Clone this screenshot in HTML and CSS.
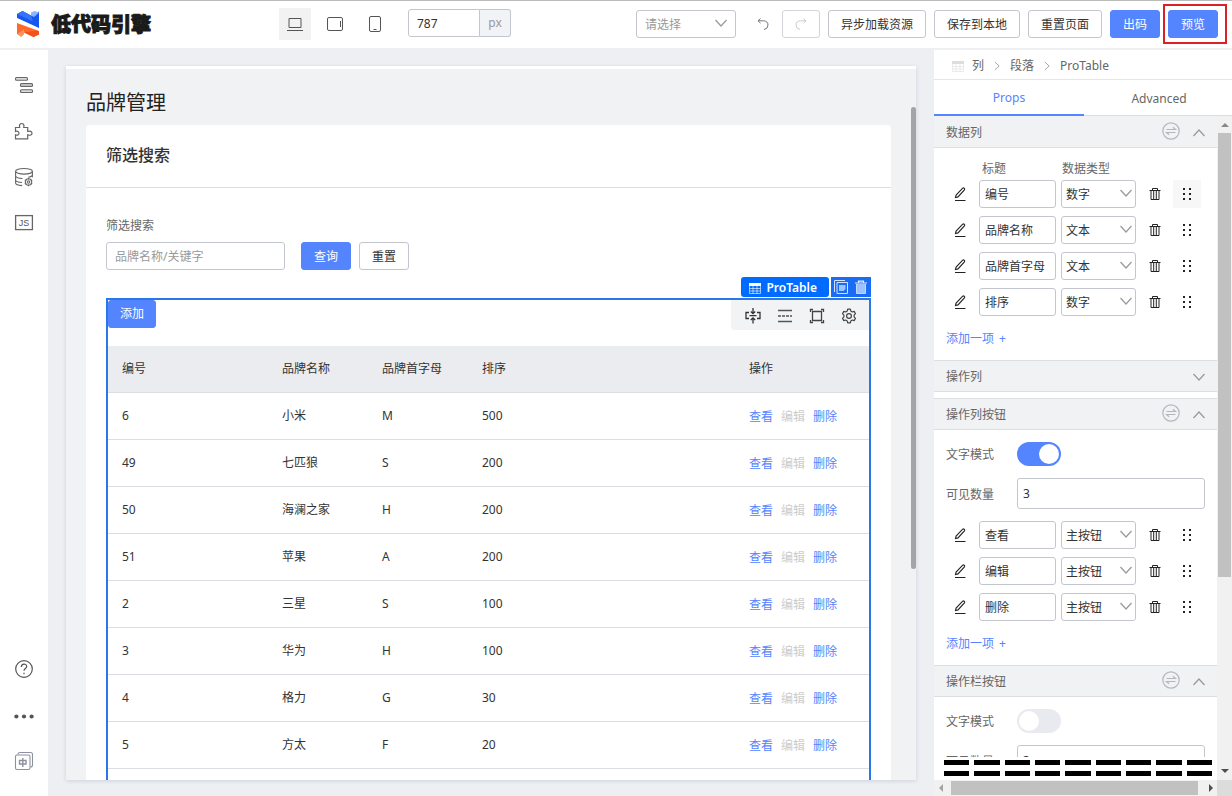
FILE: index.html
```html
<!DOCTYPE html>
<html lang="zh-CN">
<head>
<meta charset="utf-8">
<title>低代码引擎</title>
<link rel="stylesheet" href="styles.css">
</head>
<body>
<svg class="sprite" aria-hidden="true">
  <symbol id="chev" viewBox="0 0 14 14"><path d="M1.500 4 7 10l5.500-6" fill="none" stroke="currentColor" stroke-width="1.200"/></symbol>
  <symbol id="pencil" viewBox="0 0 14 14"><path d="M2 13.500h10.500M2.500 10.500l.6-2.500L9.700 1.200q.9-.6 1.600.1t.1 1.600L5 9.900z" fill="none" stroke="currentColor" stroke-width="1.100"/></symbol>
  <symbol id="trash" viewBox="0 0 14 14"><path d="M1.500 3.500h11M4.500 3.500v-2h5v2M3 3.500v9h8v-9M5.700 4v8M8.300 4v8" fill="none" stroke="currentColor"/></symbol>
  <symbol id="dots" viewBox="0 0 14 14"><path d="M3 1h2v2H3zM9 1h2v2H9zM3 6h2v2H3zM9 6h2v2H9zM3 11h2v2H3zM9 11h2v2H9z" fill="currentColor"/></symbol>
  <symbol id="swap" viewBox="0 0 18 18"><circle cx="9" cy="9" r="8.200" fill="none" stroke="currentColor" stroke-width="1.200"/><path d="M4.500 7.500h9l-2.600-2.300M13.500 10.500h-9l2.600 2.300" fill="none" stroke="currentColor" stroke-width="1.200"/></symbol>
  <symbol id="grid" viewBox="0 0 12 12"><path d="M0 1h12v3H0z" fill="currentColor"/><path d="M.5 4v7.500h11V4M.5 6.500h11M.5 9h11M4 4v7.500M8 4v7.500" fill="none" stroke="currentColor" stroke-width=".6"/></symbol>
</svg>

<header class="topbar">
  <div class="brand">
    <svg class="brand-mark" viewBox="0 0 24 28" aria-hidden="true">
      <path d="M1 4 6.500 1 15 5.500l8-4V18L1 8z" fill="#1557f0"/>
      <path d="M6.500 1 15 5.500l2 6L1 4z" fill="#3374fa"/>
      <path d="M15 5.500V2.500L18.500 1 23 2.500 18 7z" fill="#8db4ff"/>
      <path d="M1 10.500 23 20v4.500L17.500 27 8 22.500 6 26 1 24z" fill="#ff6a2b"/>
      <path d="M8 22.500 23 20v4.500L17.500 27z" fill="#f2511b"/>
      <path d="M1 24l7-4.500v5L5 27z" fill="#ff9464"/>
      <path d="M1 8.200 23 18.500V21L1 13z" fill="#fff"/>
    </svg>
    <span class="brand-name">低代码引擎</span>
  </div>
  <div class="devices">
    <button class="device active" aria-label="桌面"><svg width="18" height="18" viewBox="0 0 18 18"><path d="M3 3.500h12v9H3zM1 15.500h16" fill="none" stroke="#555"/></svg></button>
    <button class="device" aria-label="平板"><svg width="18" height="18" viewBox="0 0 18 18"><rect x="1.500" y="2.500" width="15" height="13" rx="1.500" fill="none" stroke="#555"/><path d="M14.500 6v6" stroke="#555"/></svg></button>
    <button class="device" aria-label="手机"><svg width="18" height="18" viewBox="0 0 18 18"><rect x="3.500" y="1.500" width="11" height="15" rx="1.500" fill="none" stroke="#555"/><path d="M7.500 14.500h3" stroke="#555"/></svg></button>
    <div class="size-box"><input class="size-input" aria-label="宽度" value="787"><span class="size-unit">px</span></div>
  </div>
  <div class="actions">
    <div class="select top-select"><select aria-label="请选择"><option>请选择</option></select><svg><use href="#chev"/></svg></div>
    <div class="history">
      <button class="icon-btn" aria-label="撤销"><svg width="14" height="14" viewBox="0 0 14 14"><path d="M4.500 1.500 2 3.800l2.500 2.300M2 3.800h5.500q4.500.3 4.500 4.200T8 12.500" fill="none" stroke="#777"/></svg></button>
      <button class="icon-btn boxed" aria-label="重做"><svg width="14" height="14" viewBox="0 0 14 14"><path d="M9.500 1.500 12 3.800 9.500 6.100M12 3.800H6.500Q2 4.100 2 8t4 4.500" fill="none" stroke="#ccc"/></svg></button>
    </div>
    <button class="btn">异步加载资源</button>
    <button class="btn">保存到本地</button>
    <button class="btn">重置页面</button>
    <button class="btn primary">出码</button>
    <div class="highlight"><button class="btn primary">预览</button></div>
  </div>
</header>

<div class="layout">
  <nav class="rail">
    <div class="rail-group">
      <button aria-label="大纲树"><svg viewBox="0 0 20 20"><g fill="#ddd" stroke="#666" stroke-width="1.100"><rect x="1.500" y="2.500" width="12" height="2.800" rx="1"/><rect x="6.500" y="8.600" width="12" height="2.800" rx="1"/><rect x="6.500" y="14.700" width="12" height="2.800" rx="1"/></g></svg></button>
      <button aria-label="组件库"><svg viewBox="0 0 20 20"><path d="M1.500 6.500h4.200c-.8-2.300.2-4 2-4s2.800 1.700 2 4h4v4c2.500-.9 4.300 0 4.300 1.700s-1.800 2.600-4.300 1.700v4H1.500v-4c2 .8 3.500-.2 3.500-1.700s-1.500-2.500-3.500-1.700z" fill="none" stroke="#666" stroke-width="1.200"/></svg></button>
      <button aria-label="数据源"><svg viewBox="0 0 20 20"><g fill="none" stroke="#666" stroke-width="1.100"><ellipse cx="10" cy="4.300" rx="8.400" ry="2.800"/><path d="M1.600 4.300v4.500c0 1.600 3.500 2.600 7 2.700M18.400 4.300v6M1.600 8.800v4.200c0 1.500 3 2.300 6.500 2.500M1.600 13v3c0 1.500 3 2.400 6.500 2.600"/><path d="M18.400 8.500c-1 1-2.500 1.500-4 1.800"/><circle cx="14.500" cy="15" r="3.200"/><circle cx="14.500" cy="15" r="1.200"/><path d="M14.500 10.800v1.700M14.500 17.500v1.700M10.800 13l1.500.8M16.700 16.200l1.500.8M10.800 17l1.500-.8M16.700 13.800l1.500-.8"/></g></svg></button>
      <button aria-label="源码"><svg viewBox="0 0 20 20"><rect x="1.600" y="2.600" width="16.800" height="14" fill="none" stroke="#666" stroke-width="1.300"/><text x="10" y="13" text-anchor="middle" class="js-label">JS</text></svg></button>
    </div>
    <div class="rail-group">
      <button aria-label="帮助"><svg viewBox="0 0 20 20"><circle cx="10" cy="10" r="8.300" fill="none" stroke="#555" stroke-width="1.200"/><path d="M7.300 8c0-3.800 5.400-3.800 5.400-.6 0 2-2.700 2.200-2.700 4.300M10 13.800v1.400" fill="none" stroke="#555" stroke-width="1.200"/></svg></button>
      <button aria-label="更多"><svg viewBox="0 0 20 20"><g fill="#555"><circle cx="2.400" cy="11.500" r="2.100"/><circle cx="10" cy="11.500" r="2.100"/><circle cx="17.600" cy="11.500" r="2.100"/></g></svg></button>
      <button aria-label="语言"><svg viewBox="0 0 20 20"><g fill="none" stroke="#8b929e" stroke-width="1.100"><rect x="1.500" y="4" width="14.500" height="14.500" rx="1.500"/><path d="M4 3.500q0-2 2-2h10.500q2 0 2 2V14q0 2-2 2"/><path d="M5.500 9.500h6.500v3.500H5.500zM8.800 7v9" stroke-width="1.400"/></g></svg></button>
    </div>
  </nav>

  <main class="workspace">
    <div class="canvas">
      <h1 class="page-title">品牌管理</h1>
      <section class="card">
        <h2 class="card-title">筛选搜索</h2>
        <div class="card-body">
          <form class="filter">
            <label for="kw">筛选搜索</label>
            <div class="filter-row">
              <input id="kw" placeholder="品牌名称/关键字">
              <button type="button" class="btn primary">查询</button>
              <button type="button" class="btn">重置</button>
            </div>
          </form>
          <div class="table-box">
            <div class="node-tools">
              <span class="node-name"><svg width="12" height="12"><use href="#grid"/></svg>ProTable</span>
              <span class="node-actions">
                <button aria-label="复制"><svg width="14" height="14" viewBox="0 0 14 14"><path d="M11 .5H.5V12M3 2.500h10.500v11H3z" fill="none" stroke="#cfe2ff"/><path d="M5 5h6.500v4l-2 2H5z" fill="#9cc3ff"/></svg></button>
                <button aria-label="删除"><svg width="14" height="14" viewBox="0 0 14 14"><path d="M1 3h12M4.500 3V1.200h5V3" fill="none" stroke="#e4efff" stroke-width="1.200"/><path d="M2.500 4h9v9.500h-9z" fill="#9cc3ff"/><path d="M2.500 4v9.500h9V4" fill="none" stroke="#cfe2ff" stroke-width=".9"/></svg></button>
              </span>
            </div>
            <div class="table-bar">
              <button class="btn primary add">添加</button>
              <div class="table-tools">
                <button aria-label="行高"><svg viewBox="0 0 16 16"><path d="M4 4.500H1v6h3M12 4.500h3v6h-3M8 0v5.500M5.800 3.500 8 5.700l2.200-2.200M8 15.500V10M5.800 12 8 9.800l2.200 2.200M4.500 7.700h7" fill="none" stroke="#333" stroke-width="1.300"/></svg></button>
                <button aria-label="密度"><svg viewBox="0 0 16 16"><path d="M1 2.500h14M1 13.500h14" stroke="#555" stroke-width="1.300"/><path d="M1 8h14" stroke="#555" stroke-width="1.300" stroke-dasharray="3 1"/></svg></button>
                <button aria-label="全屏"><svg viewBox="0 0 16 16"><path d="M3.500 3.500h9v9h-9zM1.500 4V1.500H4M12 1.500h2.500V4M14.500 12v2.500H12M4 14.500H1.500V12" fill="none" stroke="#444" stroke-width="1.300"/></svg></button>
                <button aria-label="设置"><svg viewBox="0 0 16 16"><path d="M6.700 1.200h2.600l.5 1.900 1.500.9 1.900-.6 1.300 2.300L13.100 7.100v1.800l1.400 1.400-1.300 2.300-1.900-.6-1.500.9-.5 1.900H6.700l-.5-1.900L4.700 12l-1.900.6-1.300-2.300 1.400-1.400V7.100L1.500 5.700l1.300-2.300 1.900.6 1.500-.9z" fill="none" stroke="#444" stroke-width="1.200" stroke-linejoin="round"/><circle cx="8" cy="8" r="2.400" fill="none" stroke="#444" stroke-width="1.200"/></svg></button>
              </div>
            </div>
            <table>
              <colgroup><col class="c-id"><col class="c-name"><col class="c-letter"><col class="c-sort"><col class="c-ops"></colgroup>
              <thead><tr><th>编号</th><th>品牌名称</th><th>品牌首字母</th><th>排序</th><th>操作</th></tr></thead>
              <tbody>
                <tr><td>6</td><td>小米</td><td>M</td><td>500</td><td><div class="ops"><a href="#">查看</a><a class="off">编辑</a><a href="#">删除</a></div></td></tr>
                <tr><td>49</td><td>七匹狼</td><td>S</td><td>200</td><td><div class="ops"><a href="#">查看</a><a class="off">编辑</a><a href="#">删除</a></div></td></tr>
                <tr><td>50</td><td>海澜之家</td><td>H</td><td>200</td><td><div class="ops"><a href="#">查看</a><a class="off">编辑</a><a href="#">删除</a></div></td></tr>
                <tr><td>51</td><td>苹果</td><td>A</td><td>200</td><td><div class="ops"><a href="#">查看</a><a class="off">编辑</a><a href="#">删除</a></div></td></tr>
                <tr><td>2</td><td>三星</td><td>S</td><td>100</td><td><div class="ops"><a href="#">查看</a><a class="off">编辑</a><a href="#">删除</a></div></td></tr>
                <tr><td>3</td><td>华为</td><td>H</td><td>100</td><td><div class="ops"><a href="#">查看</a><a class="off">编辑</a><a href="#">删除</a></div></td></tr>
                <tr><td>4</td><td>格力</td><td>G</td><td>30</td><td><div class="ops"><a href="#">查看</a><a class="off">编辑</a><a href="#">删除</a></div></td></tr>
                <tr><td>5</td><td>方太</td><td>F</td><td>20</td><td><div class="ops"><a href="#">查看</a><a class="off">编辑</a><a href="#">删除</a></div></td></tr>
              </tbody>
            </table>
          </div>
        </div>
      </section>
      <div class="canvas-thumb"></div>
    </div>
  </main>

  <aside class="panel">
    <div class="crumbs">
      <svg class="crumb-icon" width="12" height="12"><use href="#grid"/></svg>
      <span>列</span><svg class="sep" width="10" height="10"><use href="#chev"/></svg><span>段落</span><svg class="sep" width="10" height="10"><use href="#chev"/></svg><span>ProTable</span>
    </div>
    <div class="tabs" role="tablist">
      <button role="tab" class="tab active" aria-selected="true">Props</button>
      <button role="tab" class="tab" aria-selected="false">Advanced</button>
    </div>
    <div class="panel-main">
      <div class="panel-col">
        <div class="settings">
          <section>
            <h3 class="sec-head first">数据列<svg class="swap"><use href="#swap"/></svg><svg class="chev up"><use href="#chev"/></svg></h3>
            <div class="sec-body">
              <div class="col-labels"><span>标题</span><span>数据类型</span></div>
              <div class="rows">
                <div class="row"><button aria-label="编辑"><svg><use href="#pencil"/></svg></button><input aria-label="标题" value="编号"><div class="select"><select aria-label="数据类型"><option>数字</option></select><svg><use href="#chev"/></svg></div><button aria-label="删除"><svg><use href="#trash"/></svg></button><button class="hover" aria-label="拖动"><svg><use href="#dots"/></svg></button></div>
                <div class="row"><button aria-label="编辑"><svg><use href="#pencil"/></svg></button><input aria-label="标题" value="品牌名称"><div class="select"><select aria-label="数据类型"><option>文本</option></select><svg><use href="#chev"/></svg></div><button aria-label="删除"><svg><use href="#trash"/></svg></button><button aria-label="拖动"><svg><use href="#dots"/></svg></button></div>
                <div class="row"><button aria-label="编辑"><svg><use href="#pencil"/></svg></button><input aria-label="标题" value="品牌首字母"><div class="select"><select aria-label="数据类型"><option>文本</option></select><svg><use href="#chev"/></svg></div><button aria-label="删除"><svg><use href="#trash"/></svg></button><button aria-label="拖动"><svg><use href="#dots"/></svg></button></div>
                <div class="row"><button aria-label="编辑"><svg><use href="#pencil"/></svg></button><input aria-label="标题" value="排序"><div class="select"><select aria-label="数据类型"><option>数字</option></select><svg><use href="#chev"/></svg></div><button aria-label="删除"><svg><use href="#trash"/></svg></button><button aria-label="拖动"><svg><use href="#dots"/></svg></button></div>
              </div>
              <button class="add-link">添加一项<span>+</span></button>
            </div>
          </section>
          <section class="collapsed"><h3 class="sec-head">操作列<svg class="chev"><use href="#chev"/></svg></h3></section>
          <section>
            <h3 class="sec-head">操作列按钮<svg class="swap"><use href="#swap"/></svg><svg class="chev up"><use href="#chev"/></svg></h3>
            <div class="sec-body">
              <div class="field"><label for="m1">文字模式</label><input id="m1" class="switch" type="checkbox" role="switch" checked></div>
              <div class="field"><label for="n1">可见数量</label><input id="n1" class="num" value="3"></div>
              <div class="rows">
                <div class="row"><button aria-label="编辑"><svg><use href="#pencil"/></svg></button><input aria-label="标题" value="查看"><div class="select"><select aria-label="类型"><option>主按钮</option></select><svg><use href="#chev"/></svg></div><button aria-label="删除"><svg><use href="#trash"/></svg></button><button aria-label="拖动"><svg><use href="#dots"/></svg></button></div>
                <div class="row"><button aria-label="编辑"><svg><use href="#pencil"/></svg></button><input aria-label="标题" value="编辑"><div class="select"><select aria-label="类型"><option>主按钮</option></select><svg><use href="#chev"/></svg></div><button aria-label="删除"><svg><use href="#trash"/></svg></button><button aria-label="拖动"><svg><use href="#dots"/></svg></button></div>
                <div class="row"><button aria-label="编辑"><svg><use href="#pencil"/></svg></button><input aria-label="标题" value="删除"><div class="select"><select aria-label="类型"><option>主按钮</option></select><svg><use href="#chev"/></svg></div><button aria-label="删除"><svg><use href="#trash"/></svg></button><button aria-label="拖动"><svg><use href="#dots"/></svg></button></div>
              </div>
              <button class="add-link">添加一项<span>+</span></button>
            </div>
          </section>
          <section>
            <h3 class="sec-head">操作栏按钮<svg class="swap"><use href="#swap"/></svg><svg class="chev up"><use href="#chev"/></svg></h3>
            <div class="sec-body">
              <div class="field"><label for="m2">文字模式</label><input id="m2" class="switch" type="checkbox" role="switch"></div>
              <div class="field"><label for="n2">可见数量</label><input id="n2" class="num" value="3"></div>
            </div>
          </section>
        </div>
        <div class="dashes"><i></i><i></i><i></i><i></i><i></i><i></i><i></i><i></i><i></i></div>
        <div class="bar-x"><b class="arrow left"></b><b class="thumb"></b><b class="arrow right"></b></div>
      </div>
      <div class="bar-y"><b class="arrow top"></b><b class="thumb"></b><b class="space"></b><b class="arrow bottom"></b><b class="corner"></b></div>
    </div>
  </aside>
</div>
</body>
</html>
```
FILE: styles.css
```css
* { box-sizing: border-box; }
body {
  margin: 0;
  height: 100vh;
  display: flex;
  flex-direction: column;
  gap: 2px;
  overflow: hidden;
  background: #edeff3;
  color: #333;
  font: 12px/18px "Noto Sans", "Noto Sans CJK SC", sans-serif;
}
button, input, select { font: inherit; color: inherit; margin: 0; }
button { border: 0; background: none; padding: 0; display: flex; align-items: center; justify-content: center; flex: none; cursor: pointer; }
input, .select select { border: 1px solid #c4c6cf; border-radius: 3px; background: #fff; height: 28px; outline: 0; min-width: 0; }
h1, h2, h3 { margin: 0; font-weight: 400; }
.sprite { display: none; }

.btn { height: 28px; padding: 1px 12px 0; border: 1px solid #c4c6cf; border-radius: 3px; background: #fff; white-space: nowrap; }
.btn.primary { background: #5584ff; border-color: #5584ff; color: #fff; }

.select { position: relative; }
.select select { appearance: none; width: 100%; padding: 2px 4px 0; display: block; }
.select svg { position: absolute; right: 3px; top: 6px; width: 14px; height: 14px; color: #999; pointer-events: none; }

/* top bar */
.topbar { flex: none; height: 48px; border-top: 1px solid #bbb; background: #fff; display: flex; align-items: center; padding: 0 14px 1px 16px; }
.brand { width: 263px; display: flex; align-items: center; gap: 11px; }
.brand-mark { width: 24px; height: 28px; }
.brand-name { font: 900 20px/28px "Noto Sans CJK SC", sans-serif; color: #1a1a1a; -webkit-text-stroke: 1px #1a1a1a; }
.devices { display: flex; align-items: center; gap: 8px; }
.device { width: 32px; height: 32px; }
.device.active { background: #f2f2f2; }
.size-box { display: flex; margin-left: 9px; padding-bottom: 2px; }
.size-input { width: 72px; padding: 0 8px; border-radius: 3px 0 0 3px; }
.size-unit { width: 31px; border: 1px solid #c4c6cf; border-left: 0; border-radius: 0 3px 3px 0; background: #f2f3f7; color: #999; display: flex; align-items: center; justify-content: center; }
.actions { margin-left: auto; display: flex; gap: 8px; }
.top-select { width: 100px; }
.top-select select { color: #999; padding: 2px 8px 0; }
.top-select svg { right: 8px; }
.history { display: flex; }
.icon-btn { width: 38px; height: 28px; }
.icon-btn.boxed { border: 1px solid #d2d4da; border-radius: 3px; }
.highlight { position: relative; }
.highlight::after { content: ""; position: absolute; inset: -6px -9px -6px -5px; border: 2px solid #da2128; pointer-events: none; }

.layout { flex: 1; min-height: 0; display: flex; }

/* left rail */
.rail { flex: none; width: 48px; background: #fff; display: flex; flex-direction: column; justify-content: space-between; align-items: center; padding: 25px 0; }
.rail-group { display: flex; flex-direction: column; gap: 26px; }
.rail svg { width: 20px; height: 20px; display: block; }
.js-label { font: 400 9px "Liberation Sans", sans-serif; fill: #555; }

/* canvas */
.workspace { flex: 1; min-width: 0; padding: 16px 18px; }
.canvas { position: relative; height: 100%; overflow: hidden; background: #f1f2f4; border-top: 3px solid #fff; padding: 20px 25px 0 20px; box-shadow: 0 1px 4px rgba(31, 50, 88, .15); }
.page-title { font-size: 20px; line-height: 28px; color: #222; }
.card { margin-top: 8px; background: #fff; border-radius: 4px; }
.card-title { padding: 16px 20px 18px; border-bottom: 1px solid #dcdee3; font-size: 16px; line-height: 28px; font-weight: 500; }
.card-body { padding: 28px 20px 0; }
.filter label { display: block; line-height: 20px; color: #666; }
.filter-row { display: flex; gap: 8px; margin-top: 6px; }
.filter-row input { width: 179px; padding: 0 8px; margin-right: 8px; }
.filter-row input::placeholder { color: #999; }
.table-box { position: relative; margin-top: 28px; border: 2px solid #2878e8; padding-bottom: 80px; }
.node-tools { position: absolute; right: -2px; bottom: 100%; margin-bottom: 3px; display: flex; gap: 2px; }
.node-name { height: 20px; padding: 1px 12px 0 8px; border-radius: 3px; background: #006cff; color: #fff; font-weight: 600; display: flex; align-items: center; gap: 5px; }
.node-actions { display: flex; align-items: center; gap: 6px; padding: 0 3px; background: #1a6cf5; }
.table-bar { height: 46px; display: flex; justify-content: space-between; align-items: flex-start; }
.add { padding: 0 11px; }
.table-tools { display: flex; gap: 16px; padding: 8px 12px 6px 14px; background: #f2f3f5; border-radius: 0 0 0 3px; }
.table-tools svg { width: 16px; height: 16px; display: block; }
table { width: 100%; table-layout: fixed; border-collapse: separate; border-spacing: 0; }
th, td { height: 47px; padding: 0 14px; text-align: left; font-weight: 400; border-bottom: 1px solid #dcdee3; }
th { background: #ebecf0; }
.c-id { width: 160px; }
.c-name, .c-letter { width: 100px; }
.c-ops { width: 134px; }
.ops { display: flex; gap: 8px; padding-top: 2px; }
.ops a { color: #5584ff; text-decoration: none; }
.ops .off { color: #ccc; }
.canvas-thumb { position: absolute; right: 0; top: 38px; width: 5px; height: 462px; border-radius: 3px; background: #a3a4a8; }

/* settings panel */
.panel { flex: none; width: 298px; background: #fff; display: flex; flex-direction: column; overflow: hidden; color: #666; }
.crumbs { flex: none; height: 30px; border-bottom: 1px solid #e4e6ea; display: flex; align-items: center; padding: 2px 0 0 18px; gap: 8px; }
.crumb-icon { color: #ddd; }
.sep { color: #999; transform: rotate(-90deg); }
.tabs { flex: none; display: flex; height: 36px; }
.tab { width: 150px; padding-top: 2px; border-bottom: 1px solid #dcdee3; }
.tab.active { color: #5584ff; border-bottom: 2px solid #5584ff; }
.panel-main { flex: 1; min-height: 0; display: flex; }
.panel-col { flex: 1; min-width: 0; display: flex; flex-direction: column; }
.settings { flex: 1; min-height: 0; overflow: hidden; }
.sec-head { height: 32px; padding: 2px 11px 0 12px; background: #f1f2f4; border: solid #dcdee3; border-width: 1px 0; font-size: 12px; display: flex; align-items: center; gap: 12px; }
.sec-head.first { border-top: 0; }
.sec-head .swap { width: 18px; height: 18px; margin: 0 0 4px auto; color: #b5b7bd; }
.sec-head .chev { width: 14px; height: 14px; color: #999; }
.collapsed .sec-head .chev { margin-left: auto; }
.collapsed { margin-bottom: 6px; }
.up { transform: rotate(180deg); }
.sec-body { padding: 12px; }
.col-labels { display: flex; line-height: 18px; margin-bottom: 2px; padding-left: 36px; }
.col-labels span { width: 80px; }
.rows { display: flex; flex-direction: column; gap: 8px; }
.row { display: flex; gap: 5px; }
.row > button { width: 28px; height: 28px; color: #222; }
.row > button + button { margin-left: -1px; }
.row > button.hover { background: #f7f7f7; }
.row button svg { width: 14px; height: 14px; }
.row input { width: 77px; padding: 0 5px; color: #333; }
.row .select { width: 75px; color: #333; }
.add-link { margin-top: 14px; color: #5584ff; gap: 5px; }
.field { display: flex; align-items: center; margin-bottom: 12px; }
.field label { width: 71px; padding-top: 2px; }
.num { flex: 1; height: 31px; padding: 0 5px; color: #333; }
.switch { appearance: none; width: 44px; height: 24px; border: 0; border-radius: 12px; background: #e9eaef; padding: 2px; }
.switch::before { content: ""; display: block; width: 20px; height: 20px; border-radius: 50%; background: #fff; }
.switch:checked { background: #5584ff; }
.switch:checked::before { margin-left: auto; }
.dashes { flex: none; height: 23px; padding: 3px 5px 4px 10px; display: flex; gap: 5px; }
.dashes i { flex: 1; border: solid #000; border-width: 5px 0; }

.bar-x, .bar-y { flex: none; display: flex; background: #f1f1f1; }
.bar-x { height: 16px; align-items: center; justify-content: space-between; padding: 0 4px 0 5px; }
.bar-x .thumb { flex: 1; height: 14px; margin: 0 11px 0 8px; background: #c1c1c1; }
.bar-y { width: 15px; flex-direction: column; align-items: center; padding-top: 7px; }
.bar-y .thumb { flex: 0 1 444px; width: 13px; margin-top: 6px; background: #c1c1c1; }
.bar-y .space { flex: 1; }
.bar-y .corner { width: 15px; height: 16px; margin-top: 7px; background: #dcdcdc; }
.arrow { border: 4px solid transparent; }
.arrow.left { border-left: 0; border-right: 4px solid #a3a3a3; }
.arrow.right { border-right: 0; border-left: 4px solid #505050; }
.arrow.top { border-top: 0; border-bottom: 4px solid #888; }
.arrow.bottom { border-bottom: 0; border-top: 4px solid #505050; }
```
